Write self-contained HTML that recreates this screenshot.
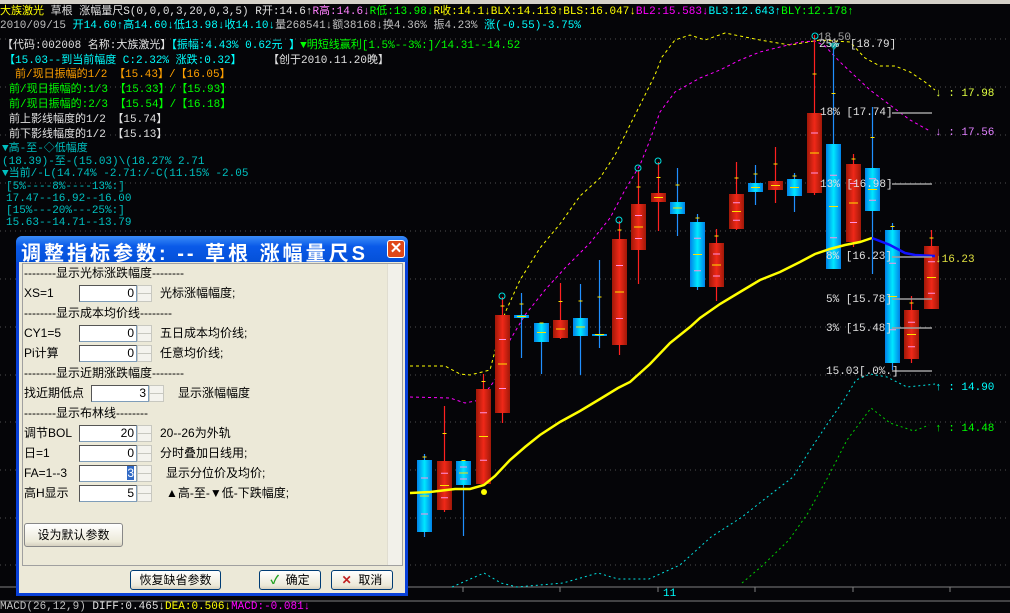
<!DOCTYPE html>
<html><head><meta charset="utf-8">
<style>
*{margin:0;padding:0;box-sizing:border-box}
body{width:1010px;height:612px;background:#050508;overflow:hidden;position:relative;font-family:"Liberation Mono","Noto Sans CJK SC",monospace;font-size:11px;color:#c0c0c0}
.t{position:absolute;white-space:nowrap;line-height:12px}
svg{position:absolute;left:0;top:0}
.y{color:#ffff00}.w{color:#e0e0e0}.p{color:#ff80ff}.g{color:#00ff00}.m{color:#ff00ff}.c{color:#00ffff}.o{color:#ffa000}.tc{color:#00c0c0}
#dlg{position:absolute;left:16px;top:236px;width:392px;height:360px;background:#0840d8;border-radius:6px 6px 0 0}
#ttl{position:absolute;left:0;top:0;width:392px;height:26px;border-radius:6px 6px 0 0;background:linear-gradient(#3a8cf8,#0a5ae8 40%,#0450d8);color:#fff;font:bold 20px "Liberation Sans","Noto Sans CJK SC",sans-serif;padding:1px 0 0 5px;letter-spacing:3px}
#cls{position:absolute;left:371px;top:4px;width:18px;height:18px;background:#e04818;border:1px solid #fff;border-radius:3px;color:#fff;font:bold 15px "Liberation Sans",sans-serif;text-align:center;line-height:16px}
#bd{position:absolute;left:3px;top:26px;width:386px;height:331px;background:#ece9d8}
#in{position:absolute;left:3px;top:1px;width:381px;height:303px;border:1px solid #a0a0a0;background:#ece9d8}
.d{position:absolute;font-family:"Liberation Sans","Noto Sans CJK SC",sans-serif;font-size:12px;color:#000;white-space:nowrap;line-height:14px}
.inp{position:absolute;width:58px;height:17px;background:#fff;border:1px solid #7f9db9;border-top-color:#555;border-left-color:#555;text-align:right;padding-right:2px;font:12px "Liberation Sans",sans-serif;line-height:15px;color:#000}
.sp{position:absolute;width:15px;height:17px;border:1px solid #c8c8c0;background:#f4f3ee}
.sp:after{content:"";position:absolute;left:0;top:7px;width:13px;border-top:1px solid #c8c8c0}
.btn{position:absolute;height:20px;border:1px solid #003c74;border-radius:3px;background:linear-gradient(#fff,#ece9d8 80%,#d6d0c0);font:12px "Liberation Sans","Noto Sans CJK SC",sans-serif;color:#000;text-align:center;line-height:18px}
</style></head><body>
<div style="position:absolute;left:0;top:0;width:1010px;height:4px;background:#d4d0c8"></div>
<svg width="1010" height="612" id="ch"></svg>

<div class="t" style="left:0;top:6px"><span class="y">大族激光</span> <span class="w">草根 涨幅量尺S(0,0,0,3,20,0,3,5) R开:14.6↑</span><span class="p">R高:14.6↓</span><span class="g">R低:13.98↓</span><span class="y">R收:14.1↓BLX:14.113↑BLS:16.047↓</span><span class="m">BL2:15.583↓</span><span class="c">BL3:12.643↑</span><span class="g">BLY:12.178↑</span></div>
<div class="t" style="left:0;top:20px">2010/09/15 <span class="c">开14.60↑高14.60↓低13.98↓收14.10↓</span>量268541↓额38168↓换4.36% 振4.23% <span class="c">涨(-0.55)-3.75%</span></div>
<div class="t w" style="left:2px;top:40px">【代码:002008 名称:大族激光】<span class="c">【振幅:4.43% 0.62元 】</span><span class="g">▼明短线赢利[1.5%--3%:]/14.31--14.52</span></div>
<div class="t c" style="left:4px;top:55px">【15.03--到当前幅度 C:2.32%  涨跌:0.32】</div>
<div class="t w" style="left:268px;top:55px">【创于2010.11.20晚】</div>
<div class="t o" style="left:15px;top:69px">前/现日振幅的1/2 【15.43】/【16.05】</div>
<div class="t g" style="left:9px;top:84px">前/现日振幅的:1/3 【15.33】/【15.93】</div>
<div class="t g" style="left:9px;top:99px">前/现日振幅的:2/3 【15.54】/【16.18】</div>
<div class="t w" style="left:9px;top:114px">前上影线幅度的1/2 【15.74】</div>
<div class="t w" style="left:9px;top:129px">前下影线幅度的1/2 【15.13】</div>
<div class="t tc" style="left:2px;top:143px">▼高-至-◇低幅度</div>
<div class="t tc" style="left:2px;top:156px">(18.39)-至-(15.03)\(18.27% 2.71</div>
<div class="t tc" style="left:2px;top:168px">▼当前/-L(14.74% -2.71:/-C(11.15% -2.05</div>
<div class="t tc" style="left:6px;top:181px">[5%----8%----13%:]</div>
<div class="t tc" style="left:6px;top:193px">17.47--16.92--16.00</div>
<div class="t tc" style="left:6px;top:205px">[15%---20%---25%:]</div>
<div class="t tc" style="left:6px;top:217px">15.63--14.71--13.79</div>

<div class="t w" style="left:818px;top:32px;color:#a0a0a0">18.50</div>
<div class="t w" style="left:819px;top:39px">25%</div><div class="t w" style="left:850px;top:39px">[18.79]</div>
<div class="t w" style="left:820px;top:107px">18%  [17.74]</div>
<div class="t w" style="left:820px;top:179px">13%  [16.98]</div>
<div class="t w" style="left:826px;top:251px">8%  [16.23]</div>
<div class="t w" style="left:826px;top:294px">5%  [15.78]</div>
<div class="t w" style="left:826px;top:323px">3%  [15.48]</div>
<div class="t w" style="left:826px;top:366px">15.03[.0%.]</div>
<div class="t" style="left:935px;top:88px;color:#e0ff40">↓ : 17.98</div>
<div class="t" style="left:935px;top:127px;color:#e080ff">↓ : 17.56</div>
<div class="t" style="left:935px;top:254px;color:#e0e040">↓16.23</div>
<div class="t c" style="left:935px;top:382px">↑ : 14.90</div>
<div class="t g" style="left:935px;top:423px">↑ : 14.48</div>
<div class="t c" style="left:663px;top:588px">11</div>
<div class="t" style="left:0;top:601px;color:#c0c0c0">MACD(26,12,9) <span class="w">DIFF:0.465↓</span><span class="y">DEA:0.506↓</span><span class="m">MACD:-0.081↓</span></div>

<div id="dlg">
<div id="ttl">调整指标参数: -- 草根 涨幅量尺S</div>
<div id="cls">✕</div>
<div id="bd">
<div id="in">
<div style="position:absolute;right:0;top:0;width:15px;height:301px;background:#f2f1ea;border-left:1px solid #e0ddd0"></div>
</div>
<div class="d" style="left:5px;top:4px">--------显示光标涨跌幅度--------</div>
<div class="d" style="left:5px;top:24px">XS=1</div><div class="inp" style="left:60px;top:23px">0</div><div class="sp" style="left:118px;top:23px"></div><div class="d" style="left:141px;top:24px">光标涨幅幅度;</div>
<div class="d" style="left:5px;top:44px">--------显示成本均价线--------</div>
<div class="d" style="left:5px;top:64px">CY1=5</div><div class="inp" style="left:60px;top:63px">0</div><div class="sp" style="left:118px;top:63px"></div><div class="d" style="left:141px;top:64px">五日成本均价线;</div>
<div class="d" style="left:5px;top:84px">Pi计算</div><div class="inp" style="left:60px;top:83px">0</div><div class="sp" style="left:118px;top:83px"></div><div class="d" style="left:141px;top:84px">任意均价线;</div>
<div class="d" style="left:5px;top:104px">--------显示近期涨跌幅度--------</div>
<div class="d" style="left:5px;top:124px">找近期低点</div><div class="inp" style="left:72px;top:123px">3</div><div class="sp" style="left:130px;top:123px"></div><div class="d" style="left:159px;top:124px">显示涨幅幅度</div>
<div class="d" style="left:5px;top:144px">--------显示布林线--------</div>
<div class="d" style="left:5px;top:164px">调节BOL</div><div class="inp" style="left:60px;top:163px">20</div><div class="sp" style="left:118px;top:163px"></div><div class="d" style="left:141px;top:164px">20--26为外轨</div>
<div class="d" style="left:5px;top:184px">日=1</div><div class="inp" style="left:60px;top:183px">0</div><div class="sp" style="left:118px;top:183px"></div><div class="d" style="left:141px;top:184px">分时叠加日线用;</div>
<div class="d" style="left:5px;top:204px">FA=1--3</div><div class="inp" style="left:60px;top:203px"><span style="background:#316ac5;color:#fff">3</span></div><div class="sp" style="left:118px;top:203px"></div><div class="d" style="left:147px;top:204px">显示分位价及均价;</div>
<div class="d" style="left:5px;top:224px">高H显示</div><div class="inp" style="left:60px;top:223px">5</div><div class="sp" style="left:118px;top:223px"></div><div class="d" style="left:147px;top:224px">▲高-至-▼低-下跌幅度;</div>
<div class="btn" style="left:5px;top:261px;width:99px;height:24px;line-height:22px;border-color:#888">设为默认参数</div>
<div class="btn" style="left:111px;top:308px;width:91px">恢复缺省参数</div>
<div class="btn" style="left:240px;top:308px;width:62px"><span style="color:#21a121;font-weight:bold">✓</span>&nbsp; 确定</div>
<div class="btn" style="left:312px;top:308px;width:62px"><span style="color:#c02020;font-weight:bold">✕</span>&nbsp; 取消</div>
</div>
</div>

<script>
var s=document.getElementById('ch'),h='';
h+='<defs><linearGradient id="rg"><stop offset="0" stop-color="#a01808"/><stop offset=".5" stop-color="#f02818"/><stop offset="1" stop-color="#a01808"/></linearGradient><linearGradient id="bg"><stop offset="0" stop-color="#0080e8"/><stop offset=".5" stop-color="#00e8ff"/><stop offset="1" stop-color="#0080e8"/></linearGradient></defs>';
[39,87,135,183,231,279,327,375,422,470,518,565].forEach(function(y){h+='<line x1="0" y1="'+y+'" x2="1010" y2="'+y+'" stroke="#505050" stroke-dasharray="1,4"/>';});
h+='<line x1="0" y1="587" x2="1010" y2="587" stroke="#808080"/><line x1="0" y1="601" x2="1010" y2="601" stroke="#808080"/>';
[463,560,658,755,853,950].forEach(function(x){h+='<line x1="'+x+'" y1="587" x2="'+x+'" y2="592" stroke="#808080"/>';});
function pl(p,c,da,w){h+='<polyline fill="none" stroke="'+c+'" stroke-width="'+(w||1)+'" '+(da?'stroke-dasharray="'+da+'"':'')+' points="'+p+'"/>';}
pl('410,366 445,366 460,374 470,375 490,370 505,313 520,280 540,248 560,224 580,196 600,178 615,155 630,125 645,95 655,75 662,57 675,40 690,35 705,40 725,33 760,40 790,45 820,40 850,42 865,58 880,66 895,66 910,72 925,82 935,90','#ffff00','3,3');
pl('410,397 450,398 465,403 480,400 495,380 510,340 525,315 545,290 565,268 590,243 610,218 625,190 640,165 650,140 660,112 675,92 700,78 720,70 740,60 760,52 780,47 800,42 815,41 825,46 840,62 855,76 870,90 890,105 910,120 930,131','#ff00ff','3,3');
pl('452,587 484,573 501,583 517,587 563,583 598,573 618,579 649,579 680,565 711,537 742,517 766,498 793,477 812,447 828,423 844,400 856,380 870,374 887,377 907,387 927,385 935,384','#00e0e0','2,3');
pl('742,583 762,566 789,540 808,513 828,477 847,440 871,408 890,423 914,431 929,425','#00d000','2,3');
[[417,460,532,454,537,0],[437,461,510,406,512,1],[456,461,485,460,536,0],[476,389,484,374,484,1],[495,315,413,297,423,1],[514,315,318,293,358,0],[534,323,342,323,374,0],[553,320,338,283,339,1],[573,318,336,284,375,0],[592,334,335,260,348,0],[612,239,345,221,355,1],[631,204,250,170,284,1],[651,193,202,162,231,1],[670,202,214,168,236,0],[690,222,287,214,290,0],[709,243,287,229,301,1],[729,194,229,162,230,1],[748,183,192,165,205,0],[768,181,190,147,203,1],[787,179,196,173,212,0],[807,113,193,35,195,1],[826,144,269,43,269,0],[846,164,242,154,247,1],[865,168,211,107,274,0],[885,230,363,223,370,0],[904,310,359,296,363,1],[924,246,309,230,309,1]].forEach(function(c){
var x=c[0],cx=x+7.5,col=c[5]?'#ff2020':'#2090ff';
h+='<line x1="'+cx+'" y1="'+c[3]+'" x2="'+cx+'" y2="'+c[4]+'" stroke="'+col+'" stroke-width="1.2"/>';
var hh=Math.max(c[2]-c[1],2);
h+='<rect x="'+x+'" y="'+c[1]+'" width="15" height="'+hh+'" fill="url(#'+(c[5]?'rg':'bg')+')"/>';
var m=(c[1]+c[2])/2;
h+='<line x1="'+(x+3)+'" y1="'+m+'" x2="'+(x+12)+'" y2="'+m+'" stroke="#ffe000"/>';
if(hh>20){h+='<line x1="'+(x+4)+'" y1="'+(c[1]+hh/4)+'" x2="'+(x+11)+'" y2="'+(c[1]+hh/4)+'" stroke="#ff90e0"/><line x1="'+(x+4)+'" y1="'+(c[2]-hh/4)+'" x2="'+(x+11)+'" y2="'+(c[2]-hh/4)+'" stroke="#ff90e0"/>';}
h+='<line x1="'+(cx-2)+'" y1="'+(c[3]+(c[1]-c[3])/2)+'" x2="'+(cx+2)+'" y2="'+(c[3]+(c[1]-c[3])/2)+'" stroke="#ffe000"/>';
});
[[502,296],[619,220],[638,168],[658,161],[815,36]].forEach(function(p){h+='<circle cx="'+p[0]+'" cy="'+p[1]+'" r="3" fill="none" stroke="#00e0e0"/>';});
h+='<path d="M828 43 L840 43 L834 50Z" fill="#10a0a0"/>';
pl('410,493 430,492 455,489 470,489 484,485 495,476 510,460 525,447 540,435 560,422 580,411 600,399 618,388 630,382 650,364 670,343 690,327 700,318 720,304 740,292 760,280 780,272 800,262 815,254 830,249 845,245 860,242 872,238','#ffff00','',2.5);
pl('872,238 890,245 905,253 915,255 935,256','#1010ff','',2.5);
h+='<circle cx="484" cy="492" r="3" fill="#ffff00"/>';
[113,184,257,299,328,371].forEach(function(y){h+='<line x1="892" y1="'+y+'" x2="932" y2="'+y+'" stroke="#a0a0a0" stroke-width="1.5"/>';});
s.innerHTML=h;
</script>
</body></html>
